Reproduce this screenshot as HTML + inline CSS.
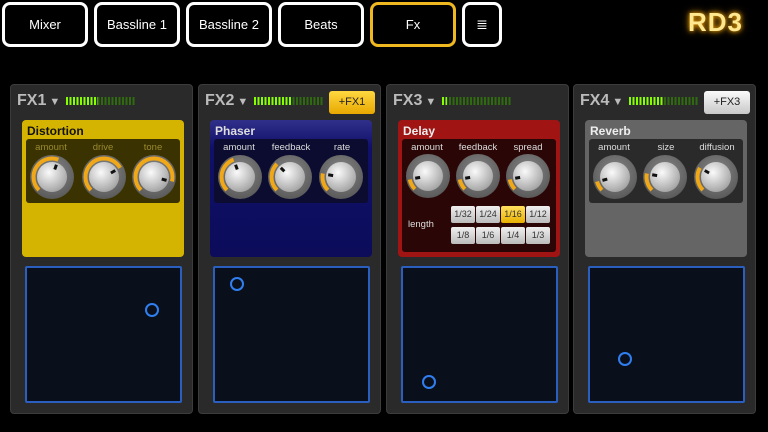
<!DOCTYPE html><html><head><style>
*{margin:0;padding:0;box-sizing:border-box}
body{width:768px;height:432px;background:#000;position:relative;overflow:hidden;font-family:"Liberation Sans",sans-serif}
.a{position:absolute}
.tab{position:absolute;top:2px;height:45px;border:3px solid #fff;border-radius:8px;color:#fff;font-size:13px;display:flex;align-items:center;justify-content:center;background:#000}
.p{position:absolute;top:84px;width:183px;height:330px;background:#2a2a2a;border:1px solid #3c3c3c;border-radius:4px}
.fx{position:absolute;left:6px;top:7px;color:#bbb;font-weight:bold;font-size:16px}
.fx span{font-size:11px;margin-left:3px}
.m{position:absolute;top:12px;height:8px;width:70px;background:repeating-linear-gradient(90deg,#2f6a10 0 2px,transparent 2px 3.5px)}
.on{background:repeating-linear-gradient(90deg,#8f0 0 2px,transparent 2px 3.5px)}
.box{position:absolute;left:11px;top:35px;width:162px;height:137px;border-radius:4px}
.box b{position:absolute;left:5px;top:4px;font-size:12px}
.in{position:absolute;left:4px;top:19px;width:154px;height:64px;border-radius:3px}
.l{position:absolute;font-size:9.5px;width:50px;text-align:center;top:3px}
.pad{position:absolute;left:14px;top:181px;width:157px;height:137px;background:#0a0f1c;border:2px solid #2a5fc0;border-radius:2px}
.dot{position:absolute;width:14px;height:14px;border:2px solid #2f7ff0;border-radius:50%}
.btn{position:absolute;width:24px;height:17px;background:linear-gradient(#f0f0f0,#bbb);border-radius:2px;font-size:9px;color:#333;text-align:center;line-height:17px}
.add{position:absolute;top:6px;right:5px;width:46px;height:23px;border-radius:3px;font-size:11px;text-align:center;line-height:23px;color:#222}
</style></head><body>
<svg width="0" height="0" style="position:absolute"><defs>
<radialGradient id="kg" cx="40%" cy="35%" r="70%"><stop offset="0" stop-color="#fafafa"/><stop offset="1" stop-color="#a0a0a0"/></radialGradient>
<radialGradient id="og" cx="50%" cy="40%" r="60%"><stop offset="0" stop-color="#8a8a8a"/><stop offset="1" stop-color="#5a5a5a"/></radialGradient>
</defs></svg>
<div class="tab" style="left:2px;width:86px">Mixer</div>
<div class="tab" style="left:94px;width:86px">Bassline 1</div>
<div class="tab" style="left:186px;width:86px">Bassline 2</div>
<div class="tab" style="left:278px;width:86px">Beats</div>
<div class="tab" style="left:370px;width:86px;border-color:#f0b820">Fx</div>
<div class="tab" style="left:462px;width:40px;font-size:14px">≣</div>
<div class="a" style="left:688px;top:7px;color:#ffe890;font-size:26px;font-weight:bold;letter-spacing:1px;text-shadow:0 0 4px #f0a000,0 0 8px #c08000">RD3</div>

<div class="p" style="left:10px">
<div class="fx">FX1<span>▼</span></div><div class="m" style="left:55px"></div>
<div class="m on" style="left:55px;width:32px"></div>
<div class="box" style="background:#d4b400"><b style="color:#111">Distortion</b>
<div class="in" style="background:#3a3200"><div class="l" style="left:0;color:#9a8a30">amount</div><div class="l" style="left:52px;color:#9a8a30">drive</div><div class="l" style="left:102px;color:#9a8a30">tone</div></div></div>
<div class="pad"><div class="dot" style="left:118px;top:35px"></div></div></div>

<div class="p" style="left:198px">
<div class="fx">FX2<span>▼</span></div>
<div class="m" style="left:55px"></div><div class="m on" style="left:55px;width:38px"></div>
<div class="add" style="background:linear-gradient(#ffd840,#e8a800)">+FX1</div>
<div class="box" style="background:linear-gradient(#30308a,#10106a 20%,#0c0c5a)"><b style="color:#ddd">Phaser</b>
<div class="in" style="background:#0c0c30"><div class="l" style="left:0;color:#ddd">amount</div><div class="l" style="left:52px;color:#ddd">feedback</div><div class="l" style="left:103px;color:#ddd">rate</div></div></div>
<div class="pad"><div class="dot" style="left:15px;top:9px"></div></div></div>

<div class="p" style="left:386px">
<div class="fx">FX3<span>▼</span></div>
<div class="m" style="left:55px"></div><div class="m on" style="left:55px;width:5px"></div>
<div class="box" style="background:#a01414"><b style="color:#eee">Delay</b>
<div class="in" style="background:#2a0606;height:113px"><div class="l" style="left:0;color:#ddd">amount</div><div class="l" style="left:51px;color:#ddd">feedback</div><div class="l" style="left:101px;color:#ddd">spread</div>
<div class="a" style="left:6px;top:80px;color:#ddd;font-size:9.5px">length</div>
<div class="btn" style="left:49px;top:67px">1/32</div><div class="btn" style="left:74px;top:67px">1/24</div><div class="btn" style="left:99px;top:67px;background:linear-gradient(#ffe060,#e8b000)">1/16</div><div class="btn" style="left:124px;top:67px">1/12</div>
<div class="btn" style="left:49px;top:88px">1/8</div><div class="btn" style="left:74px;top:88px">1/6</div><div class="btn" style="left:99px;top:88px">1/4</div><div class="btn" style="left:124px;top:88px">1/3</div></div></div>
<div class="pad"><div class="dot" style="left:19px;top:107px"></div></div></div>

<div class="p" style="left:573px">
<div class="fx">FX4<span>▼</span></div>
<div class="m" style="left:55px"></div><div class="m on" style="left:55px;width:35px"></div>
<div class="add" style="background:linear-gradient(#fafafa,#c8c8c8)">+FX3</div>
<div class="box" style="background:#656565"><b style="color:#eee">Reverb</b>
<div class="in" style="background:#2a2a2a"><div class="l" style="left:0;color:#ddd">amount</div><div class="l" style="left:52px;color:#ddd">size</div><div class="l" style="left:103px;color:#ddd">diffusion</div></div></div>
<div class="pad"><div class="dot" style="left:28px;top:84px"></div></div></div>

<svg class="a" style="left:0;top:0" width="768" height="432">
<defs><g id="k"><circle r="22" fill="url(#og)"/></g></defs>
<g transform="translate(52,177)"><use href="#k"/><circle r="18.5" fill="none" stroke="#f0a818" stroke-width="4" stroke-dasharray="50 200" transform="rotate(135)"/><circle r="15" fill="url(#kg)"/><line x1="0" y1="-8" x2="0" y2="-13" stroke="#111" stroke-width="3" transform="rotate(20)"/></g>
<g transform="translate(104,177)"><use href="#k"/><circle r="18.5" fill="none" stroke="#f0a818" stroke-width="4" stroke-dasharray="63 200" transform="rotate(135)"/><circle r="15" fill="url(#kg)"/><line x1="0" y1="-8" x2="0" y2="-13" stroke="#111" stroke-width="3" transform="rotate(60)"/></g>
<g transform="translate(154,177)"><use href="#k"/><circle r="18.5" fill="none" stroke="#f0a818" stroke-width="4" stroke-dasharray="77 200" transform="rotate(135)"/><circle r="15" fill="url(#kg)"/><line x1="0" y1="-8" x2="0" y2="-13" stroke="#111" stroke-width="3" transform="rotate(105)"/></g>
<g transform="translate(240,177)"><use href="#k"/><circle r="18.5" fill="none" stroke="#f0a818" stroke-width="4" stroke-dasharray="37 200" transform="rotate(135)"/><circle r="15" fill="url(#kg)"/><line x1="0" y1="-8" x2="0" y2="-13" stroke="#111" stroke-width="3" transform="rotate(-20)"/></g>
<g transform="translate(290,177)"><use href="#k"/><circle r="18.5" fill="none" stroke="#f0a818" stroke-width="4" stroke-dasharray="29 200" transform="rotate(135)"/><circle r="15" fill="url(#kg)"/><line x1="0" y1="-8" x2="0" y2="-13" stroke="#111" stroke-width="3" transform="rotate(-45)"/></g>
<g transform="translate(341,177)"><use href="#k"/><circle r="18.5" fill="none" stroke="#f0a818" stroke-width="4" stroke-dasharray="18 200" transform="rotate(135)"/><circle r="15" fill="url(#kg)"/><line x1="0" y1="-8" x2="0" y2="-13" stroke="#111" stroke-width="3" transform="rotate(-80)"/></g>
<g transform="translate(428,176)"><use href="#k"/><circle r="18.5" fill="none" stroke="#f0a818" stroke-width="4" stroke-dasharray="11 200" transform="rotate(135)"/><circle r="15" fill="url(#kg)"/><line x1="0" y1="-8" x2="0" y2="-13" stroke="#111" stroke-width="3" transform="rotate(-100)"/></g>
<g transform="translate(478,176)"><use href="#k"/><circle r="18.5" fill="none" stroke="#f0a818" stroke-width="4" stroke-dasharray="11 200" transform="rotate(135)"/><circle r="15" fill="url(#kg)"/><line x1="0" y1="-8" x2="0" y2="-13" stroke="#111" stroke-width="3" transform="rotate(-100)"/></g>
<g transform="translate(528,176)"><use href="#k"/><circle r="18.5" fill="none" stroke="#f0a818" stroke-width="4" stroke-dasharray="11 200" transform="rotate(135)"/><circle r="15" fill="url(#kg)"/><line x1="0" y1="-8" x2="0" y2="-13" stroke="#111" stroke-width="3" transform="rotate(-100)"/></g>
<g transform="translate(615,177)"><use href="#k"/><circle r="18.5" fill="none" stroke="#f0a818" stroke-width="4" stroke-dasharray="10 200" transform="rotate(135)"/><circle r="15" fill="url(#kg)"/><line x1="0" y1="-8" x2="0" y2="-13" stroke="#111" stroke-width="3" transform="rotate(-105)"/></g>
<g transform="translate(665,177)"><use href="#k"/><circle r="18.5" fill="none" stroke="#f0a818" stroke-width="4" stroke-dasharray="18 200" transform="rotate(135)"/><circle r="15" fill="url(#kg)"/><line x1="0" y1="-8" x2="0" y2="-13" stroke="#111" stroke-width="3" transform="rotate(-80)"/></g>
<g transform="translate(716,177)"><use href="#k"/><circle r="18.5" fill="none" stroke="#f0a818" stroke-width="4" stroke-dasharray="24 200" transform="rotate(135)"/><circle r="15" fill="url(#kg)"/><line x1="0" y1="-8" x2="0" y2="-13" stroke="#111" stroke-width="3" transform="rotate(-60)"/></g>
</svg>
</body></html>
